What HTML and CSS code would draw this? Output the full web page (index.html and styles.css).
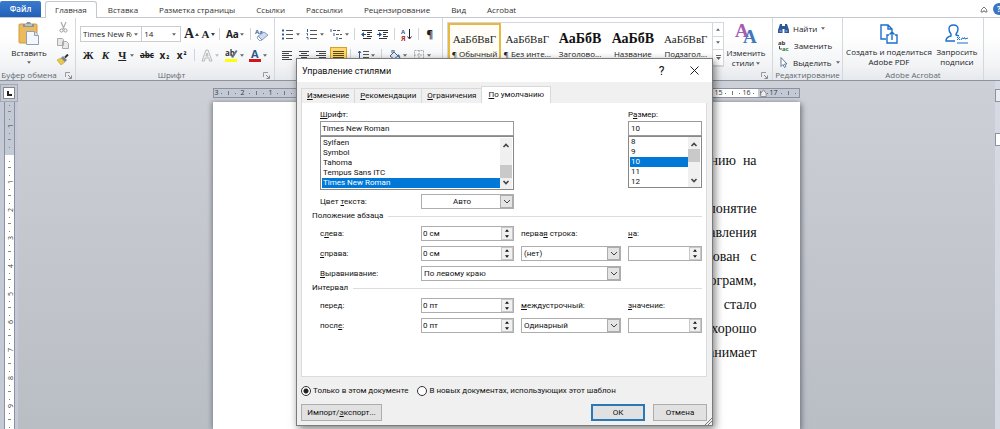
FILE: index.html
```html
<!DOCTYPE html>
<html lang="ru">
<head>
<meta charset="utf-8">
<title>Управление стилями</title>
<link rel="stylesheet" href="styles.css">
</head>
<body>
<svg class="defs" aria-hidden="true">
  <symbol id="caret" viewBox="0 0 5 3"><path d="M0 0h5L2.500 3z" fill="#666"/></symbol>
  <symbol id="launch" viewBox="0 0 7 7"><path d="M.5 5V.5H5" fill="none" stroke="#999"/><path d="M3 3l3 3M6.500 3.500v3h-3" fill="none" stroke="#888"/></symbol>
  <symbol id="chev" viewBox="0 0 8 5"><path d="M1 1l3 3 3-3" fill="none" stroke="#444"/></symbol>
  <symbol id="bold-chev" viewBox="0 0 8 5"><path d="M1.500 1L4 3.500 6.500 1" fill="none" stroke="#444" stroke-width="1.600"/></symbol>
  <symbol id="tri" viewBox="0 0 5 3"><path d="M0 0h5L2.500 3z" fill="#111"/></symbol>
</svg>
<div class="app">
  <nav class="tabs">
    <button class="tab file">Файл</button>
    <button class="tab current">Главная</button>
    <button class="tab">Вставка</button>
    <button class="tab">Разметка страницы</button>
    <button class="tab">Ссылки</button>
    <button class="tab">Рассылки</button>
    <button class="tab">Рецензирование</button>
    <button class="tab">Вид</button>
    <button class="tab">Acrobat</button>
    <div class="tabs-end">
      <button class="plain" aria-label="Свернуть ленту"><svg width="8" height="7" viewBox="0 0 8 7"><path d="M1.500 3.500L4 1l2.500 2.500L7 6H5L4 4.500 3 6H1z" fill="#fff" stroke="#666" stroke-width=".9"/></svg></button>
      <button class="help" aria-label="Справка">?</button>
    </div>
  </nav>

  <div class="ribbon">
    <section class="group clipboard">
      <div class="group-body">
        <button class="big">
          <svg width="22" height="23" viewBox="0 0 22 23"><rect x="1" y="2" width="18" height="19" rx="1" fill="#ebba5c" stroke="#d09a3d"/><path d="M5 5V2h3l1-2h3l1 2h3v3z" fill="#8993a1"/><path d="M7 3h7" stroke="#e8edf3"/><path d="M8.500 9.500h8l4 4v9h-12z" fill="#f4f8fd" stroke="#8da0b8"/><path d="M16.500 9.500v4h4" fill="#d8e3f0" stroke="#8da0b8"/></svg>
          <span>Вставить</span>
          <svg class="caret"><use href="#caret"/></svg>
        </button>
        <div class="stack">
          <button class="plain" aria-label="Вырезать"><svg width="9" height="11" viewBox="0 0 9 11"><path d="M2 0l3 7M7 0L4 7" stroke="#aaa" stroke-width="1.200"/><circle cx="2.500" cy="8.500" r="1.600" fill="none" stroke="#999"/><circle cx="6.500" cy="8.500" r="1.600" fill="none" stroke="#999"/></svg></button>
          <button class="plain" aria-label="Копировать"><svg width="12" height="11" viewBox="0 0 12 11"><path d="M.5.5h5l1 1v6h-6zM5.500 3.500h4l2 2v5h-6z" fill="#e8e8e8" stroke="#aaa"/></svg></button>
          <button class="plain" aria-label="Формат по образцу"><svg width="12" height="11" viewBox="0 0 12 11"><path d="M0 6l4-2 4 4-4 3z" fill="#e8c94b" stroke="#b59a2a" stroke-width=".6"/><path d="M4 4l2-2 4 4-2 2z" fill="#7a8594"/><path d="M8 3.500L11 .5" stroke="#333" stroke-width="2"/></svg></button>
        </div>
      </div>
      <div class="group-title">Буфер обмена<svg class="launch"><use href="#launch"/></svg></div>
    </section>

    <section class="group font">
      <div class="group-body rows">
        <div class="tools">
          <div class="combo wide"><input type="text" value="Times New Ro" aria-label="Шрифт"><svg class="caret"><use href="#caret"/></svg></div>
          <div class="combo"><input type="text" value="14" aria-label="Размер шрифта"><svg class="caret"><use href="#caret"/></svg></div>
          <button class="tool glyph grow lead">A<svg width="4" height="3" viewBox="0 0 4 3"><path d="M2 0l2 3H0z" fill="#345"/></svg></button>
          <button class="tool glyph">A<svg width="4" height="3" viewBox="0 0 4 3"><path d="M0 0h4L2 3z" fill="#345"/></svg></button>
          <i class="sep"></i>
          <button class="tool w24 glyph sans">Aa<svg class="caret"><use href="#caret"/></svg></button>
          <i class="sep"></i>
          <button class="tool" aria-label="Очистить формат"><svg width="13" height="13" viewBox="0 0 13 13"><text x="0" y="6" class="svg-aa">Aa</text><path d="M3 8l6-4 4 3-6 5z" fill="#cfdcf0" stroke="#6b86b0" stroke-width=".8"/><path d="M3 8l4 4-2 1-3-3z" fill="#fff" stroke="#6b86b0" stroke-width=".8"/></svg></button>
        </div>
        <div class="tools spaced">
          <button class="tool glyph">Ж</button>
          <button class="tool glyph it">К</button>
          <button class="tool w24 glyph under"><u>Ч</u><svg class="caret"><use href="#caret"/></svg></button>
          <button class="tool glyph strike">abc</button>
          <button class="tool glyph sans">x<sub>₂</sub></button>
          <button class="tool glyph sans">x<sup>²</sup></button>
          <i class="sep"></i>
          <button class="tool w24" aria-label="Текстовые эффекты"><svg width="12" height="13" viewBox="0 0 12 13"><path d="M1 12L5 1h2l4 11H8.500L8 9H4l-.5 3z M5 7h2L6 4z" fill="#f1f1f1" stroke="#bbb"/></svg><svg class="caret faint"><use href="#caret"/></svg></button>
          <button class="tool w24" aria-label="Выделение"><svg width="13" height="13" viewBox="0 0 13 13"><text x="0" y="7" class="svg-ab">ab</text><path d="M6 8l5-7 1.500 1L8 9z" fill="#5c7391"/><rect y="10" width="12" height="3" fill="#ff0"/></svg><svg class="caret"><use href="#caret"/></svg></button>
          <button class="tool w24" aria-label="Цвет текста"><svg width="12" height="13" viewBox="0 0 12 13"><text x="2" y="9" class="svg-a">A</text><rect y="10" width="12" height="3" fill="#d2151b"/></svg><svg class="caret"><use href="#caret"/></svg></button>
        </div>
      </div>
      <div class="group-title">Шрифт<svg class="launch"><use href="#launch"/></svg></div>
    </section>

    <section class="group para">
      <div class="group-body rows">
        <div class="tools">
          <button class="tool w25" aria-label="Маркеры"><svg width="12" height="11" viewBox="0 0 12 11"><path d="M0 1.500h2M0 5.500h2M0 9.500h2" stroke="#335a97" stroke-width="2"/><path d="M4 1.500h7M4 5.500h7M4 9.500h7" stroke="#555"/></svg><svg class="caret"><use href="#caret"/></svg></button>
          <button class="tool w25" aria-label="Нумерация"><svg width="12" height="11" viewBox="0 0 12 11"><path d="M1.500 0v3M.5 4.500h1v2M.5 8.500h1.500v2" stroke="#335a97" fill="none"/><path d="M4 1.500h7M4 5.500h7M4 9.500h7" stroke="#555"/></svg><svg class="caret"><use href="#caret"/></svg></button>
          <button class="tool w25" aria-label="Многоуровневый список"><svg width="13" height="11" viewBox="0 0 13 11"><path d="M1 0v3M4 4v3M7 8v3" stroke="#335a97"/><path d="M3 1.500h8M6 5.500h6M9 9.500h4" stroke="#555" stroke-dasharray="3 1"/></svg><svg class="caret"><use href="#caret"/></svg></button>
          <i class="sep"></i>
          <button class="tool" aria-label="Уменьшить отступ"><svg width="12" height="11" viewBox="0 0 12 11"><path d="M1 1.500h10M6 3.500h5M6 5.500h3M6 7.500h5M2 9.500h8" stroke="#333"/><path d="M0 5.500L3 3v5z M3 5h2v1H3z" fill="#244f94"/></svg></button>
          <button class="tool" aria-label="Увеличить отступ"><svg width="12" height="11" viewBox="0 0 12 11"><path d="M1 1.500h10M6 3.500h5M6 5.500h3M6 7.500h5M2 9.500h8" stroke="#333"/><path d="M5 5.500L2 3v5z M0 5h2v1H0z" fill="#244f94"/></svg></button>
          <i class="sep"></i>
          <button class="tool" aria-label="Сортировка"><svg width="11" height="13" viewBox="0 0 11 13"><text x="0" y="6" class="svg-aa">А</text><text x="0" y="13" class="svg-ya">Я</text><path d="M8.500 1v9M6.500 8.500l2 2.500 2-2.500" fill="none" stroke="#222"/></svg></button>
          <i class="sep"></i>
          <button class="tool glyph sans">¶</button>
        </div>
        <div class="tools">
          <button class="tool" aria-label="По левому краю"><svg width="11" height="11" viewBox="0 0 11 11"><path d="M0 1.500h10M0 3.500h7M0 5.500h10M0 7.500h7M0 9.500h10" stroke="#444"/></svg></button>
          <button class="tool" aria-label="По центру"><svg width="11" height="11" viewBox="0 0 11 11"><path d="M0 1.500h10M2 3.500h6M0 5.500h10M2 7.500h6M0 9.500h10" stroke="#444"/></svg></button>
          <button class="tool" aria-label="По правому краю"><svg width="11" height="11" viewBox="0 0 11 11"><path d="M0 1.500h10M3 3.500h7M0 5.500h10M3 7.500h7M0 9.500h10" stroke="#444"/></svg></button>
          <button class="tool on" aria-label="По ширине"><svg width="11" height="11" viewBox="0 0 11 11"><path d="M0 1.500h11M0 3.500h11M0 5.500h11M0 7.500h11M0 9.500h11" stroke="#5e4a14"/></svg></button>
          <i class="sep"></i>
          <button class="tool w24" aria-label="Интервал"><svg width="11" height="11" viewBox="0 0 11 11"><path d="M1.500 1v9M0 3l1.500-2L3 3M0 8l1.500 2L3 8" fill="none" stroke="#335a97"/><path d="M5 1.500h6M5 4.500h6M5 7.500h6" stroke="#555"/></svg><svg class="caret"><use href="#caret"/></svg></button>
          <i class="sep"></i>
          <button class="tool w25" aria-label="Заливка"><svg width="12" height="11" viewBox="0 0 12 11"><path d="M1 6l4-4 4 4-4 3z" fill="#e5edf7" stroke="#48648c"/><path d="M3 3V0h2v3" fill="none" stroke="#48648c"/><path d="M9 4q3 2 2 5-1 0-2-3z" fill="#3b76c4"/></svg><svg class="caret"><use href="#caret"/></svg></button>
          <button class="tool w25" aria-label="Границы"><svg width="11" height="11" viewBox="0 0 11 11"><path d="M.5.5h9v9h-9zM5 0v10M0 5h10" fill="none" stroke="#aaa" stroke-dasharray="2 1"/></svg><svg class="caret"><use href="#caret"/></svg></button>
        </div>
      </div>
    </section>

    <section class="group styles">
      <div class="group-body">
        <div class="gallery">
          <button class="style chosen"><b class="sample">АаБбВвГ</b><span>¶ Обычный</span></button>
          <button class="style"><b class="sample">АаБбВвГ</b><span>¶ Без инте...</span></button>
          <button class="style"><b class="sample heavy">АаБбВ</b><span>Заголово...</span></button>
          <button class="style"><b class="sample heavy">АаБбВ</b><span>Название</span></button>
          <button class="style"><b class="sample">АаБбВвГ</b><span>Подзагол...</span></button>
          <div class="gallery-nav">
            <button aria-label="Вверх"><svg class="caret flip"><use href="#caret"/></svg></button>
            <button aria-label="Вниз"><svg class="caret"><use href="#caret"/></svg></button>
            <button aria-label="Ещё"><svg width="5" height="5" viewBox="0 0 5 5"><path d="M0 .5h5" stroke="#666"/><path d="M0 2h5L2.500 5z" fill="#666"/></svg></button>
          </div>
        </div>
        <button class="big change">
          <svg width="22" height="23" viewBox="0 0 22 23"><text x="0" y="15" class="big-a pink">A</text><text x="8" y="21" class="big-a blue">A</text></svg>
          <span>Изменить<br>стили <svg class="caret"><use href="#caret"/></svg></span>
        </button>
      </div>
      <div class="group-title"><svg class="launch"><use href="#launch"/></svg></div>
    </section>

    <section class="group edit">
      <div class="group-body list">
        <button class="line"><svg width="11" height="11" viewBox="0 0 11 11"><path d="M2 1h2v2h3V1h2l2 6v3H6.500V6h-2v4H0V7z" fill="#2d5796"/><path d="M1.500 8h2M7.500 8h2" stroke="#b8cdea"/></svg>Найти <svg class="caret"><use href="#caret"/></svg></button>
        <button class="line"><svg width="12" height="11" viewBox="0 0 12 11"><text x="0" y="5" class="svg-aa dark">ab</text><text x="4" y="11" class="svg-aa green">ac</text><path d="M1.500 6v3H4" fill="none" stroke="#446"/></svg>Заменить</button>
        <button class="line"><svg width="11" height="11" viewBox="0 0 11 11"><path d="M3 .5v9l2-2 1.500 3 1.500-1L6.500 7H9z" fill="#fff" stroke="#556f94" stroke-width=".9"/></svg>Выделить <svg class="caret"><use href="#caret"/></svg></button>
      </div>
      <div class="group-title">Редактирование</div>
    </section>

    <section class="group acrobat">
      <div class="group-body">
        <button class="big pdf">
          <svg width="18" height="20" viewBox="0 0 18 20"><path d="M6 15H1V1h7l4 4v3M8 1v4h4M9 11H7v8h10v-8h-2M12 16V8M9.500 10.500L12 8l2.500 2.500" fill="none" stroke="#1b6fd0" stroke-width="1.400"/></svg>
          <span>Создать и поделиться<br>Adobe PDF</span>
        </button>
        <button class="big sign">
          <svg width="24" height="20" viewBox="0 0 24 20"><path d="M10 17H1q0-4 5-5V10Q4 8 4 5q0-4 4.500-4T13 5q0 3-2 5v1l3 1" fill="none" stroke="#1b6fd0" stroke-width="1.400"/><path d="M12 19h11" stroke="#1b6fd0"/><path d="M12 13l3 3m0-3l-3 3M16 16q2-4 2-1 2-3 2 0l3-1" fill="none" stroke="#1b6fd0"/></svg>
          <span>Запросить<br>подписи</span>
        </button>
      </div>
      <div class="group-title">Adobe Acrobat</div>
    </section>
  </div>

  <main class="work">
    <div class="left-rail">
      <div class="tab-kind"><button aria-label="Табуляция"><svg width="5" height="5" viewBox="0 0 5 5"><path d="M1 0v4h4" fill="none" stroke="#222" stroke-width="2"/></svg></button></div>
      <div class="vruler"><span>1</span><span></span><span>1</span><span>2</span><span>3</span><span>4</span><span>5</span><span>6</span><span>7</span><span>8</span><span>9</span></div>
    </div>
    <div class="canvas">
      <div class="hruler">
        <span>3</span><span>2</span><span>1</span><span></span><span></span><span></span><span></span><span></span><span></span><span></span><span></span><span></span><span></span><span></span><span></span><span></span><span></span><span></span><span>15</span><span>16</span><span class="indent"><svg width="7" height="8" viewBox="0 0 7 9"><path d="M3.500 1L6.500 5v3.500h-6V5z" fill="#eee" stroke="#888"/></svg>17</span>
      </div>
      <article class="page">
        <p>ению&nbsp; на</p>
        <p>&nbsp;</p>
        <p>понятие</p>
        <p>авления</p>
        <p>рован&nbsp;&nbsp; с</p>
        <p>ограмм,</p>
        <p>стало</p>
        <p>хорошо</p>
        <p>анимает</p>
      </article>
    </div>
    <div class="right-rail"><button aria-label="Линейка"></button><button class="thumb" aria-label="Прокрутка"></button></div>
  </main>

  <div class="dialog" role="dialog" aria-labelledby="dlg-title">
    <header class="dlg-head">
      <span id="dlg-title">Управление стилями</span>
      <button class="dlg-help" aria-label="Помощь">?</button>
      <button aria-label="Закрыть"><svg width="9" height="9" viewBox="0 0 9 9"><path d="M.5.5l8 8M8.500.5l-8 8" stroke="#222"/></svg></button>
    </header>
    <div class="dlg-body">
      <div class="dlg-tabs">
        <button><u>И</u>зменение</button><button><u>Р</u>екомендации</button><button><u>О</u>граничения</button><button class="active"><u>П</u>о умолчанию</button>
      </div>
      <div class="sheet">
        <div class="pickers">
          <div class="picker">
            <label for="fname"><u>Ш</u>рифт:</label>
            <input id="fname" type="text" value="Times New Roman">
            <div class="listbox">
              <select size="5" aria-label="Список шрифтов"><option>Sylfaen</option><option>Symbol</option><option>Tahoma</option><option>Tempus Sans ITC</option><option selected>Times New Roman</option></select>
              <div class="bar low"><svg class="chev flip"><use href="#bold-chev"/></svg><i></i><svg class="chev"><use href="#bold-chev"/></svg></div>
            </div>
          </div>
          <div class="picker narrow">
            <label for="fsize">Р<u>а</u>змер:</label>
            <input id="fsize" type="text" value="10">
            <div class="listbox">
              <select size="5" aria-label="Список размеров"><option>8</option><option>9</option><option selected>10</option><option>11</option><option>12</option></select>
              <div class="bar"><svg class="chev flip"><use href="#bold-chev"/></svg><i></i><svg class="chev"><use href="#bold-chev"/></svg></div>
            </div>
          </div>
        </div>
        <div class="form color-row">
          <label for="color">Цвет <u>т</u>екста:</label>
          <div class="drop mid"><select id="color"><option>Авто</option></select><span><svg class="chev"><use href="#chev"/></svg></span></div>
        </div>
        <h3>Положение абзаца</h3>
        <div class="form">
          <label for="l">с<u>л</u>ева:</label>
          <div class="spin"><input id="l" type="text" value="0 см"><span><svg class="caret flip"><use href="#tri"/></svg><svg class="caret"><use href="#tri"/></svg></span></div>
          <label for="first">перва<u>я</u> строка:</label>
          <label for="by"><u>н</u>а:</label>
          <label for="r"><u>с</u>права:</label>
          <div class="spin"><input id="r" type="text" value="0 см"><span><svg class="caret flip"><use href="#tri"/></svg><svg class="caret"><use href="#tri"/></svg></span></div>
          <div class="drop"><select id="first"><option>(нет)</option></select><span><svg class="chev"><use href="#chev"/></svg></span></div>
          <div class="spin"><input id="by" type="text" value=""><span><svg class="caret flip"><use href="#tri"/></svg><svg class="caret"><use href="#tri"/></svg></span></div>
          <label for="align"><u>В</u>ыравнивание:</label>
          <div class="drop span2"><select id="align"><option>По левому краю</option></select><span><svg class="chev"><use href="#chev"/></svg></span></div>
        </div>
        <h3>Интервал</h3>
        <div class="form">
          <label for="before">пере<u>д</u>:</label>
          <div class="spin"><input id="before" type="text" value="0 пт"><span><svg class="caret flip"><use href="#tri"/></svg><svg class="caret"><use href="#tri"/></svg></span></div>
          <label for="lines"><u>м</u>еждустрочный:</label>
          <label for="val"><u>з</u>начение:</label>
          <label for="after">посл<u>е</u>:</label>
          <div class="spin"><input id="after" type="text" value="0 пт"><span><svg class="caret flip"><use href="#tri"/></svg><svg class="caret"><use href="#tri"/></svg></span></div>
          <div class="drop"><select id="lines"><option>Одинарный</option></select><span><svg class="chev"><use href="#chev"/></svg></span></div>
          <div class="spin"><input id="val" type="text" value=""><span><svg class="caret flip"><use href="#tri"/></svg><svg class="caret"><use href="#tri"/></svg></span></div>
        </div>
      </div>
      <div class="radios">
        <label><input type="radio" name="scope" checked>Только в этом документе</label>
        <label><input type="radio" name="scope">В новых документах, использующих этот шаблон</label>
      </div>
      <div class="actions">
        <button class="import">Импорт/<u>э</u>кспорт...</button>
        <button class="ok">ОК</button>
        <button>Отмена</button>
      </div>
    </div>
    <svg class="grip" width="7" height="7" viewBox="0 0 7 7"><path d="M0 7L7 0M3 7l4-4" stroke="#777"/></svg>
  </div>
</div>
</body>
</html>
```
FILE: styles.css
```css
* { box-sizing: border-box; }
body { margin: 0; font: 8px/12px "Open Sans", "Noto Sans", sans-serif; color: #222; }
button, input, select { margin: 0; padding: 0; font: inherit; color: inherit; border: 0; background: none; border-radius: 0; outline: 0; }
svg { display: block; flex: none; }
.defs { position: absolute; width: 0; height: 0; }
.caret { width: 4px; height: 3px; }
.caret.flip, .chev.flip { transform: rotate(180deg); }
.caret.faint { opacity: .4; }
.chev { width: 8px; height: 5px; }

.app { position: relative; display: flex; flex-direction: column; min-height: 100vh; overflow: hidden; }

/* Ribbon tabs */
.tabs { display: flex; height: 18px; background: #fff; border-bottom: 1px solid #c5c9ce; padding-top: 1px; }
.tab { padding: 1px 10px 0 11px; color: #333; white-space: nowrap; }
.tab.file { width: 41px; padding: 0; background: linear-gradient(#3a7bd0, #2160b8); color: #fff; font-weight: 600; border-radius: 2px 2px 0 0; margin-right: 4px; }
.tab.current { height: 17px; padding: 0 9px; border: 1px solid #c5c9ce; border-bottom: 0; border-radius: 3px 3px 0 0; background: #fff; }
.tabs-end { margin-left: auto; display: flex; align-items: center; gap: 5px; overflow: hidden; width: 20px; }
.plain { display: grid; place-items: center; }
.help { flex: none; width: 12px; height: 12px; border-radius: 50%; background: #3a74c6; color: #fff; font-weight: 700; }

/* Ribbon */
.ribbon { display: flex; background: linear-gradient(#fff 30%, #f2f4f6 75%, #e6e9ed); border-bottom: 1px solid #8d949e; }
.group { display: flex; flex-direction: column; border-right: 1px solid #d4d7db; padding: 4px 4px 0; flex: none; }
.group-body { display: flex; height: 47px; }
.group-title { display: flex; justify-content: center; color: #62686f; height: 11px; line-height: 11px; white-space: nowrap; }
.launch { width: 7px; height: 7px; margin: 3px 0 0 auto; }
.clipboard { width: 76px; padding-left: 2px; }
.clipboard .launch { margin-left: 8px; }
.font { width: 199px; }
.font .group-title { display: grid; grid-template-columns: 1fr auto; text-align: center; }
.para { width: 168px; }
.styles { width: 330px; }
.edit { width: 70px; padding: 4px 1px 0; }
.acrobat { width: 141px; padding: 4px 2px 0; }

.big { display: flex; flex-direction: column; align-items: center; gap: 1px; width: 54px; white-space: nowrap; }
.big span { line-height: 10px; margin-top: 2px; }
.big span .caret { display: inline-block; vertical-align: middle; }
.big > .caret { margin-top: 2px; }
.stack { display: flex; flex-direction: column; gap: 5px; width: 14px; }
.rows { flex-direction: column; gap: 5px; padding-top: 4px; }
.tools { display: flex; align-items: center; height: 16px; }
.tools.spaced { gap: 1px; }
.tool { display: flex; align-items: center; justify-content: center; gap: 2px; width: 17px; height: 16px; }
.w24 { width: 24px; }
.w25 { width: 25px; }
.lead { margin-left: 2px; }
.sep { width: 1px; height: 12px; background: #d0d3d7; margin: 0 3px; }
.glyph { font: 700 11px/12px "Liberation Serif", serif; color: #222; gap: 1px; }
.glyph.sans { font-family: "Open Sans", sans-serif; font-size: 10px; }
.glyph.it { font-style: italic; }
.glyph.grow { font-size: 14px; }
.glyph.under { gap: 4px; }
.glyph.strike { text-decoration: line-through; font-family: "Open Sans", sans-serif; font-size: 8px; }
.glyph sub, .glyph sup { font-size: 8px; line-height: 8px; }
.tool.on { background: #ffd86b; border: 1px solid #d6a128; }
.combo { display: flex; align-items: center; width: 41px; height: 16px; border: 1px solid #c9cdd2; background: #fff; padding: 0 4px 0 2px; }
.combo.wide { width: 63px; border-right: 0; padding-right: 3px; }
.combo input { flex: 1; min-width: 0; width: 0; }
.combo svg { margin-left: 2px; }
.svg-aa { font: 700 6px "Open Sans", sans-serif; fill: #335a97; }
.svg-aa.dark { fill: #333; }
.svg-aa.green { fill: #2c7a3a; }
.svg-ya { font: 700 7px "Open Sans", sans-serif; fill: #a33; }
.svg-ab { font: 700 8px "Open Sans", sans-serif; fill: #333; }
.svg-a { font: 700 11px "Open Sans", sans-serif; fill: #2e5594; }
.big-a { font: 700 19px "Liberation Serif", serif; }
.pink { fill: #a65bb5; }
.blue { fill: #3f78bd; }

.gallery { display: flex; height: 45px; width: 278px; border: 1px solid #d4d7db; background: #fff; }
.style { display: flex; flex-direction: column; align-items: center; flex: 1; min-width: 0; overflow: hidden; padding: 5px 2px 0; white-space: nowrap; border: 2px solid transparent; }
.style.chosen { border-color: #e8b93c; background: #fffdf5; }
.sample { display: block; font: 400 11px/18px "Liberation Serif", serif; color: #222; }
.sample.heavy { font-weight: 700; font-size: 14px; color: #111; }
.gallery-nav { width: 11px; display: grid; border-left: 1px solid #d4d7db; }
.gallery-nav button { display: grid; place-items: center; border-bottom: 1px solid #d4d7db; }
.change { width: 44px; }
.list { flex-direction: column; justify-content: space-between; padding: 0 4px; }
.line { display: flex; align-items: center; gap: 4px; height: 13px; white-space: nowrap; }
.pdf { width: 88px; padding-top: 2px; }
.sign { width: 48px; padding-top: 2px; }

/* Document area */
.work { flex: 1; display: flex; background: linear-gradient(#cdd0d6, #b9bdc4); overflow: hidden; }
.left-rail { width: 18px; padding-top: 3px; display: flex; flex-direction: column; background: #c5cad6; }
.tab-kind { height: 18px; padding: 3px; border: 1px solid #a3a8b4; background: #c4c9d6; flex: none; }
.tab-kind button { display: grid; place-items: center; width: 10px; height: 10px; background: #fff; outline: 1px solid #888; }
.vruler {
  flex: 1 0 0; width: 11px; margin-left: 4px; padding-top: 10px; border: 1px solid #8a919f; border-width: 0 1px;
  display: flex; flex-direction: column; font-size: 7px; color: #444;
  background:
    repeating-linear-gradient(transparent 0 9px, #888 9px 10px, transparent 10px 28px) 3px 0 / 3px 100% no-repeat,
    repeating-linear-gradient(transparent 0 3px, #888 3px 4px, transparent 4px 14px) 4px 0 / 1px 100% no-repeat,
    linear-gradient(#c4c9d6 53px, #fff 53px);
}
.vruler span { height: 28px; flex: none; display: grid; place-items: center; writing-mode: vertical-rl; transform: rotate(180deg); }
.canvas { flex: 1; display: flex; flex-direction: column; align-items: center; min-width: 0; padding-top: 7px; }
.hruler {
  width: 60%; height: 10px; border: 1px solid #8a919f; display: flex; overflow: hidden; font-size: 7px; line-height: 8px; color: #333;
  background:
    repeating-linear-gradient(90deg, transparent 0 14px, #777 14px 15px, transparent 15px 28px) 0 2px / 100% 4px no-repeat,
    repeating-linear-gradient(90deg, transparent 0 7px, #777 7px 8px, transparent 8px 14px) 0 4px / 100% 1px no-repeat,
    linear-gradient(90deg, #c4c9d6 14%, #fff 14% 93%, #c4c9d6 93%);
}
.hruler span { flex: none; width: 28px; text-align: center; }
.hruler span:first-child { width: 14px; text-align: left; }
.hruler .indent { display: flex; gap: 2px; }
.page { flex: 1; width: 60%; margin-top: 4px; padding: 47px 43px 0; background: #fff; box-shadow: 2px 2px 5px #777c85, -2px 0 4px #9498a0; font: 14px/24px "Liberation Serif", serif; color: #111; text-align: right; }
.page p { margin: 0; }
.right-rail { width: 5px; background: #d4d9e3; padding-top: 8px; display: flex; flex-direction: column; gap: 31px; }
.right-rail button { height: 13px; width: 8px; background: #e9ecf2; border: 1px solid #8d939e; }
.right-rail .thumb { background: #fff; }

/* Dialog */
.dialog { position: absolute; top: 58px; left: calc(50% - 204px); width: 417px; background: #f0f0f0; border: 1px solid #7b7b7b; box-shadow: 2px 3px 8px rgba(0, 0, 0, .5); color: #111; font-family: Roboto, "Open Sans", sans-serif; }
.dlg-head { display: flex; align-items: center; height: 23px; padding: 0 13px 0 5px; background: #fff; }
.dlg-head span { flex: 1; font-size: 9px; }
.dlg-head button { width: 9px; margin-left: 24px; font-size: 12px; }
.dlg-body { padding: 4px 5px 4px 4px; }
.dlg-tabs { display: flex; align-items: flex-end; height: 17px; }
.dlg-tabs button { height: 15px; padding: 0 5px; border: 1px solid #d9d9d9; border-bottom: 0; border-right: 0; white-space: nowrap; }
.dlg-tabs .active { height: 17px; background: #fff; border-right: 1px solid #d9d9d9; padding: 0 6px; }
.sheet { background: #fff; border: 1px solid #dcdcdc; border-top: 0; padding: 6px 4px 43px 10px; }
.pickers { display: flex; justify-content: space-between; padding-left: 8px; }
.picker { width: 194px; display: flex; flex-direction: column; }
.picker.narrow { width: 74px; }
.picker > input { height: 15px; border: 1px solid #999; padding: 0 1px; }
.picker.narrow > input { padding-left: 2px; }
.listbox { display: flex; height: 54px; border: 1px solid #888; background: #fff; padding: 1px 1px 0; }
.narrow .listbox { height: 52px; padding-top: 0; }
.listbox select { flex: 1; min-width: 0; height: 50px; overflow: hidden; appearance: none; }
.listbox option { padding: 0 0 0 1px; min-height: 0; height: 10px; line-height: 10px; }
.listbox option:checked { background: #0078d7 linear-gradient(#0078d7, #0078d7); color: #fff; }
.bar { width: 12px; display: flex; flex-direction: column; align-items: center; justify-content: space-between; padding: 5px 0 4px; background: #f0f0f0; }
.bar i { width: 12px; height: 13px; background: #c9c9c9; margin-bottom: 14px; }
.bar.low i { margin: 14px 0 0; }
.form { display: grid; grid-template-columns: 94px 93px 100px 74px; gap: 5px 7px; padding-left: 8px; align-items: center; }
.color-row { padding-top: 4px; }
.sheet h3 { display: flex; align-items: center; gap: 5px; margin: 1px 0 4px; font: inherit; }
.sheet h3::after { content: ""; flex: 1; height: 1px; background: #dcdcdc; }
.spin, .drop { display: flex; height: 15px; border: 1px solid #adadad; background: #fff; }
.spin input { flex: 1; min-width: 0; padding-left: 1px; }
.spin span { width: 12px; display: grid; place-content: center; gap: 3px; border: 1px solid #c8c8c8; background: #f0f0f0; }
.drop select { flex: 1; min-width: 0; appearance: none; padding-left: 2px; }
.drop.mid select { text-align: center; }
.drop span { width: 13px; display: grid; place-content: center; border: 1px solid #adadad; background: #e4e4e4; }
.span2 { grid-column: span 2; }
.radios { display: flex; gap: 9px; padding: 8px 0 7px; }
.radios label { display: flex; align-items: center; gap: 2px; white-space: nowrap; }
.radios input { appearance: none; width: 10px; height: 10px; border: 1px solid #333; border-radius: 50%; background: #fff; }
.radios input:checked { background: radial-gradient(circle, #222 0 2px, #fff 3px); }
.actions { display: flex; gap: 8px; }
.actions button { width: 54px; height: 17px; border: 1px solid #adadad; background: #e1e1e1; }
.actions .import { width: 81px; margin-right: auto; }
.actions .ok { border: 2px solid #2a78b5; }
.grip { position: absolute; right: 0; bottom: 0; }
```
